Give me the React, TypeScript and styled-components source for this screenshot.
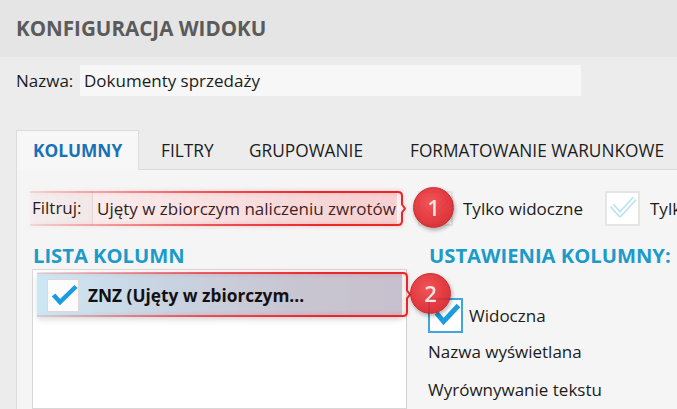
import React from 'react';
import styled, { createGlobalStyle } from 'styled-components';

const GlobalStyle = createGlobalStyle`
  html, body { margin: 0; padding: 0; background: #eeeeee; }
  body { font-family: "Open Sans", "Noto Sans", sans-serif; color: #1c1c1c; overflow: hidden; }
  * { box-sizing: border-box; }
`;

const Root = styled.div`
  width: 677px;
  height: 409px;
  overflow: hidden;
  display: flex;
  flex-direction: column;
  background: #eeeeee;
`;

const Header = styled.header`
  height: 57px;
  flex: none;
  background: #e5e5e5;
  display: flex;
  align-items: center;
  padding-left: 16px;
`;

const Title = styled.h1`
  margin: 0;
  font-size: 20.6px;
  font-weight: 700;
  color: #5b5b5b;
  line-height: 1;
`;

const Main = styled.main`
  flex: 1;
  min-height: 0;
  display: flex;
  flex-direction: column;
  padding-left: 16px;
  background: #ececec;
`;

const NameRow = styled.div`
  display: flex;
  align-items: center;
  height: 31px;
  margin-top: 8px;
  font-size: 17px;
`;

const FieldLabel = styled.span<{ $w: number }>`
  flex: none;
  width: ${(p) => p.$w}px;
  font-size: 17px;
  line-height: 24px;
`;

const NameInput = styled.div`
  width: 501px;
  height: 31px;
  background: #f7f7f7;
  display: flex;
  align-items: center;
  padding-left: 4px;
  font-size: 17px;
`;

const TabBar = styled.nav`
  display: flex;
  margin-top: 34px;
  height: 40px;
  flex: none;
  border-bottom: 1px solid #d9d9d9;
  white-space: nowrap;
`;

const Tab = styled.div<{ $active?: boolean; $w?: number; $pad: number }>`
  flex: none;
  ${(p) => (p.$w ? `width: ${p.$w}px;` : '')}
  height: 40px;
  margin-bottom: -1px;
  padding-left: ${(p) => p.$pad}px;
  display: flex;
  align-items: center;
  font-size: 17.3px;
  font-weight: ${(p) => (p.$active ? 700 : 400)};
  color: ${(p) => (p.$active ? '#1a72b6' : '#1c1c1c')};
  background: ${(p) => (p.$active ? '#f7f7f7' : 'transparent')};
  border: 1px solid ${(p) => (p.$active ? '#dcdcdc' : 'transparent')};
  border-bottom: none;
`;

const Panel = styled.section`
  flex: 1;
  min-height: 0;
  background: #f5f5f5;
  border-left: 1px solid #dcdcdc;
  padding: 20px 0 0 15px;
  display: flex;
  flex-direction: column;
`;

const FilterRow = styled.div`
  position: relative;
  display: flex;
  align-items: center;
  height: 36px;
  flex: none;
  white-space: nowrap;
`;

const FilterInput = styled.div`
  flex: none;
  width: 313px;
  height: 34px;
  background: #fbfbfb;
  border-left: 1px solid #e2e2e2;
  display: flex;
  align-items: center;
  padding-left: 4px;
  font-size: 17px;
`;

const CheckGroup = styled.label<{ $w?: number; $ml: number }>`
  flex: none;
  ${(p) => (p.$w ? `width: ${p.$w}px;` : '')}
  margin-left: ${(p) => p.$ml}px;
  display: flex;
  align-items: center;
  gap: 10px;
  font-size: 17px;
`;

const Columns = styled.div`
  flex: 1;
  min-height: 0;
  display: grid;
  grid-template-columns: 375px 1fr;
  column-gap: 21px;
  margin-top: 17px;
`;

const Column = styled.div`
  display: flex;
  flex-direction: column;
  min-height: 0;
  white-space: nowrap;
`;

const SectionTitle = styled.h2`
  margin: 0;
  padding-left: 1px;
  font-size: 20.2px;
  line-height: 24px;
  font-weight: 700;
  color: #1b9bca;
`;

const ListBox = styled.div`
  flex: 1;
  margin-top: 2px;
  background: #ffffff;
  border: 1px solid #d8d8d8;
  border-right-color: #d0d0d0;
  padding: 3px 4px 0 4px;
`;

const ListRow = styled.div`
  position: relative;
  height: 44px;
  display: flex;
  align-items: center;
  gap: 9px;
  padding-left: 10px;
  background: linear-gradient(to right, #cde7f4 0%, #c9d6e4 35%, #c8cbd8 70%, #c6c8d5 100%);
  box-shadow: 0 3px 6px rgba(0, 0, 0, 0.12);
`;

const RowText = styled.span`
  font-size: 17.3px;
  font-weight: 700;
  color: #111111;
`;

const SettingRow = styled.div<{ $mt: number }>`
  display: flex;
  align-items: center;
  gap: 6px;
  margin-top: ${(p) => p.$mt}px;
  font-size: 17px;
  line-height: 24px;
`;

const Box = styled.span<{ $variant: 'row' | 'active' | 'faint' | 'muted' }>`
  flex: none;
  display: inline-flex;
  width: ${(p) => (p.$variant === 'row' ? 32 : 35)}px;
  height: ${(p) => (p.$variant === 'row' ? 33 : 35)}px;
  background: ${(p) => (p.$variant === 'row' ? '#fdfcfc' : '#ffffff')};
  border: ${(p) =>
    p.$variant === 'row'
      ? '1px solid #e2d6d8'
      : p.$variant === 'active'
      ? '2px solid #3ea5dd'
      : '2px solid #e5e5e5'};
  svg { display: block; }
`;

const Highlight = styled.div<{ $l: number; $t: number; $w: number; $h: number }>`
  position: absolute;
  left: ${(p) => p.$l}px;
  top: ${(p) => p.$t}px;
  width: ${(p) => p.$w}px;
  height: ${(p) => p.$h}px;
  pointer-events: none;
  display: flex;
  justify-content: flex-end;
  filter: drop-shadow(0 0 2px rgba(235, 40, 40, 0.35));
`;

const HighlightBody = styled.div<{ $fill: boolean }>`
  flex: 1;
  background:
    linear-gradient(to right, rgba(235, 50, 50, 0.12), rgba(232, 38, 44, 0.7) 45%, #e8262c 80%) top / 100% 2px no-repeat,
    linear-gradient(to right, rgba(235, 50, 50, 0.12), rgba(232, 38, 44, 0.7) 45%, #e8262c 80%) bottom / 100% 2px no-repeat,
    ${(p) =>
      p.$fill
        ? 'linear-gradient(to right, rgba(240, 70, 70, 0.03), rgba(232, 60, 66, 0.17))'
        : 'linear-gradient(to right, rgba(240, 70, 70, 0), rgba(232, 60, 66, 0.04))'};
`;

const BracketSvg = styled.svg`
  flex: none;
  display: block;
  overflow: visible;
`;

const Badge = styled.div<{ $l: number; $t: number }>`
  position: absolute;
  left: ${(p) => p.$l}px;
  top: ${(p) => p.$t}px;
  z-index: 3;
  width: 41px;
  height: 41px;
  border-radius: 50%;
  background: radial-gradient(circle at 42% 38%, #ef4448 0%, #e0272d 55%, #c21a20 100%);
  border: 1.5px solid #c4161c;
  box-shadow: 1px 2px 4px rgba(0, 0, 0, 0.35);
  opacity: 0.9;
  display: flex;
  align-items: center;
  justify-content: center;
  color: #fbe2e2;
  font-family: "Open Sans", sans-serif;
  font-size: 22px;
  font-weight: 600;
  line-height: 1;
  padding-bottom: 2px;
`;

const Bracket = ({ h }: { h: number }) => {
  const m = h / 2;
  const d = `M0 1 H1 Q5 1 5 5 V${m - 4} L8 ${m} L5 ${m + 4} V${h - 5} Q5 ${h - 1} 1 ${h - 1} H0`;
  return (
    <BracketSvg width={9} height={h} viewBox={`0 0 9 ${h}`}>
      <path d={d} fill="none" stroke="#e8262c" strokeWidth={2} strokeLinejoin="round" />
    </BracketSvg>
  );
};

type CheckKind = 'row' | 'active' | 'faint' | 'muted';

const CheckBox = ({ kind }: { kind: CheckKind }) => {
  if (kind === 'row') {
    return (
      <Box $variant="row">
        <svg width="30" height="31" viewBox="0 0 30 31">
          <path d="M5.5 15 L12 22 L28 6.5" fill="none" stroke="#1a9ce0" strokeWidth={4.5} />
        </svg>
      </Box>
    );
  }
  if (kind === 'active') {
    return (
      <Box $variant="active">
        <svg width="31" height="31" viewBox="0 0 31 31">
          <path d="M6.5 13 L13.5 21.5 L28.5 5.5" fill="none" stroke="#1a9ce0" strokeWidth={5} />
        </svg>
      </Box>
    );
  }
  const outer = kind === 'faint' ? '#b9e1f3' : '#dedede';
  return (
    <Box $variant={kind}>
      <svg width="31" height="31" viewBox="0 0 31 31">
        <path d="M5 12.5 L13 21.5 L27.5 5.5" fill="none" stroke={outer} strokeWidth={5.5} strokeLinejoin="round" />
        <path d="M5 12.5 L13 21.5 L27.5 5.5" fill="none" stroke="#ffffff" strokeWidth={2.2} strokeLinejoin="round" />
      </svg>
    </Box>
  );
};

export default function App() {
  return (
    <>
      <GlobalStyle />
      <Root>
        <Header>
          <Title>KONFIGURACJA WIDOKU</Title>
        </Header>
        <Main>
          <NameRow>
            <FieldLabel $w={64}>Nazwa:</FieldLabel>
            <NameInput>Dokumenty sprzedaży</NameInput>
          </NameRow>
          <TabBar>
            <Tab $active $w={123} $pad={16}>KOLUMNY</Tab>
            <Tab $w={90} $pad={21}>FILTRY</Tab>
            <Tab $w={160} $pad={19}>GRUPOWANIE</Tab>
            <Tab $pad={20}>FORMATOWANIE WARUNKOWE</Tab>
          </TabBar>
          <Panel>
            <FilterRow>
              <FieldLabel $w={60}>Filtruj:</FieldLabel>
              <FilterInput>Ujęty w zbiorczym naliczeniu zwrotów</FilterInput>
              <CheckGroup $w={187} $ml={13}>
                <CheckBox kind="muted" />
                Tylko widoczne
              </CheckGroup>
              <CheckGroup $ml={0}>
                <CheckBox kind="faint" />
                Tylko zaznaczone
              </CheckGroup>
              <Highlight $l={-2} $t={1} $w={376} $h={35}>
                <HighlightBody $fill />
                <Bracket h={35} />
              </Highlight>
              <Badge $l={381} $t={-3}>1</Badge>
            </FilterRow>
            <Columns>
              <Column>
                <SectionTitle>LISTA KOLUMN</SectionTitle>
                <ListBox>
                  <ListRow>
                    <CheckBox kind="row" />
                    <RowText>ZNZ (Ujęty w zbiorczym...</RowText>
                    <Highlight $l={0} $t={-1} $w={374} $h={45}>
                      <HighlightBody $fill={false} />
                      <Bracket h={45} />
                    </Highlight>
                    <Badge $l={373} $t={0}>2</Badge>
                  </ListRow>
                </ListBox>
              </Column>
              <Column>
                <SectionTitle>USTAWIENIA KOLUMNY:</SectionTitle>
                <SettingRow $mt={31}>
                  <CheckBox kind="active" />
                  Widoczna
                </SettingRow>
                <SettingRow $mt={7}>Nazwa wyświetlana</SettingRow>
                <SettingRow $mt={14}>Wyrównywanie tekstu</SettingRow>
              </Column>
            </Columns>
          </Panel>
        </Main>
      </Root>
    </>
  );
}
